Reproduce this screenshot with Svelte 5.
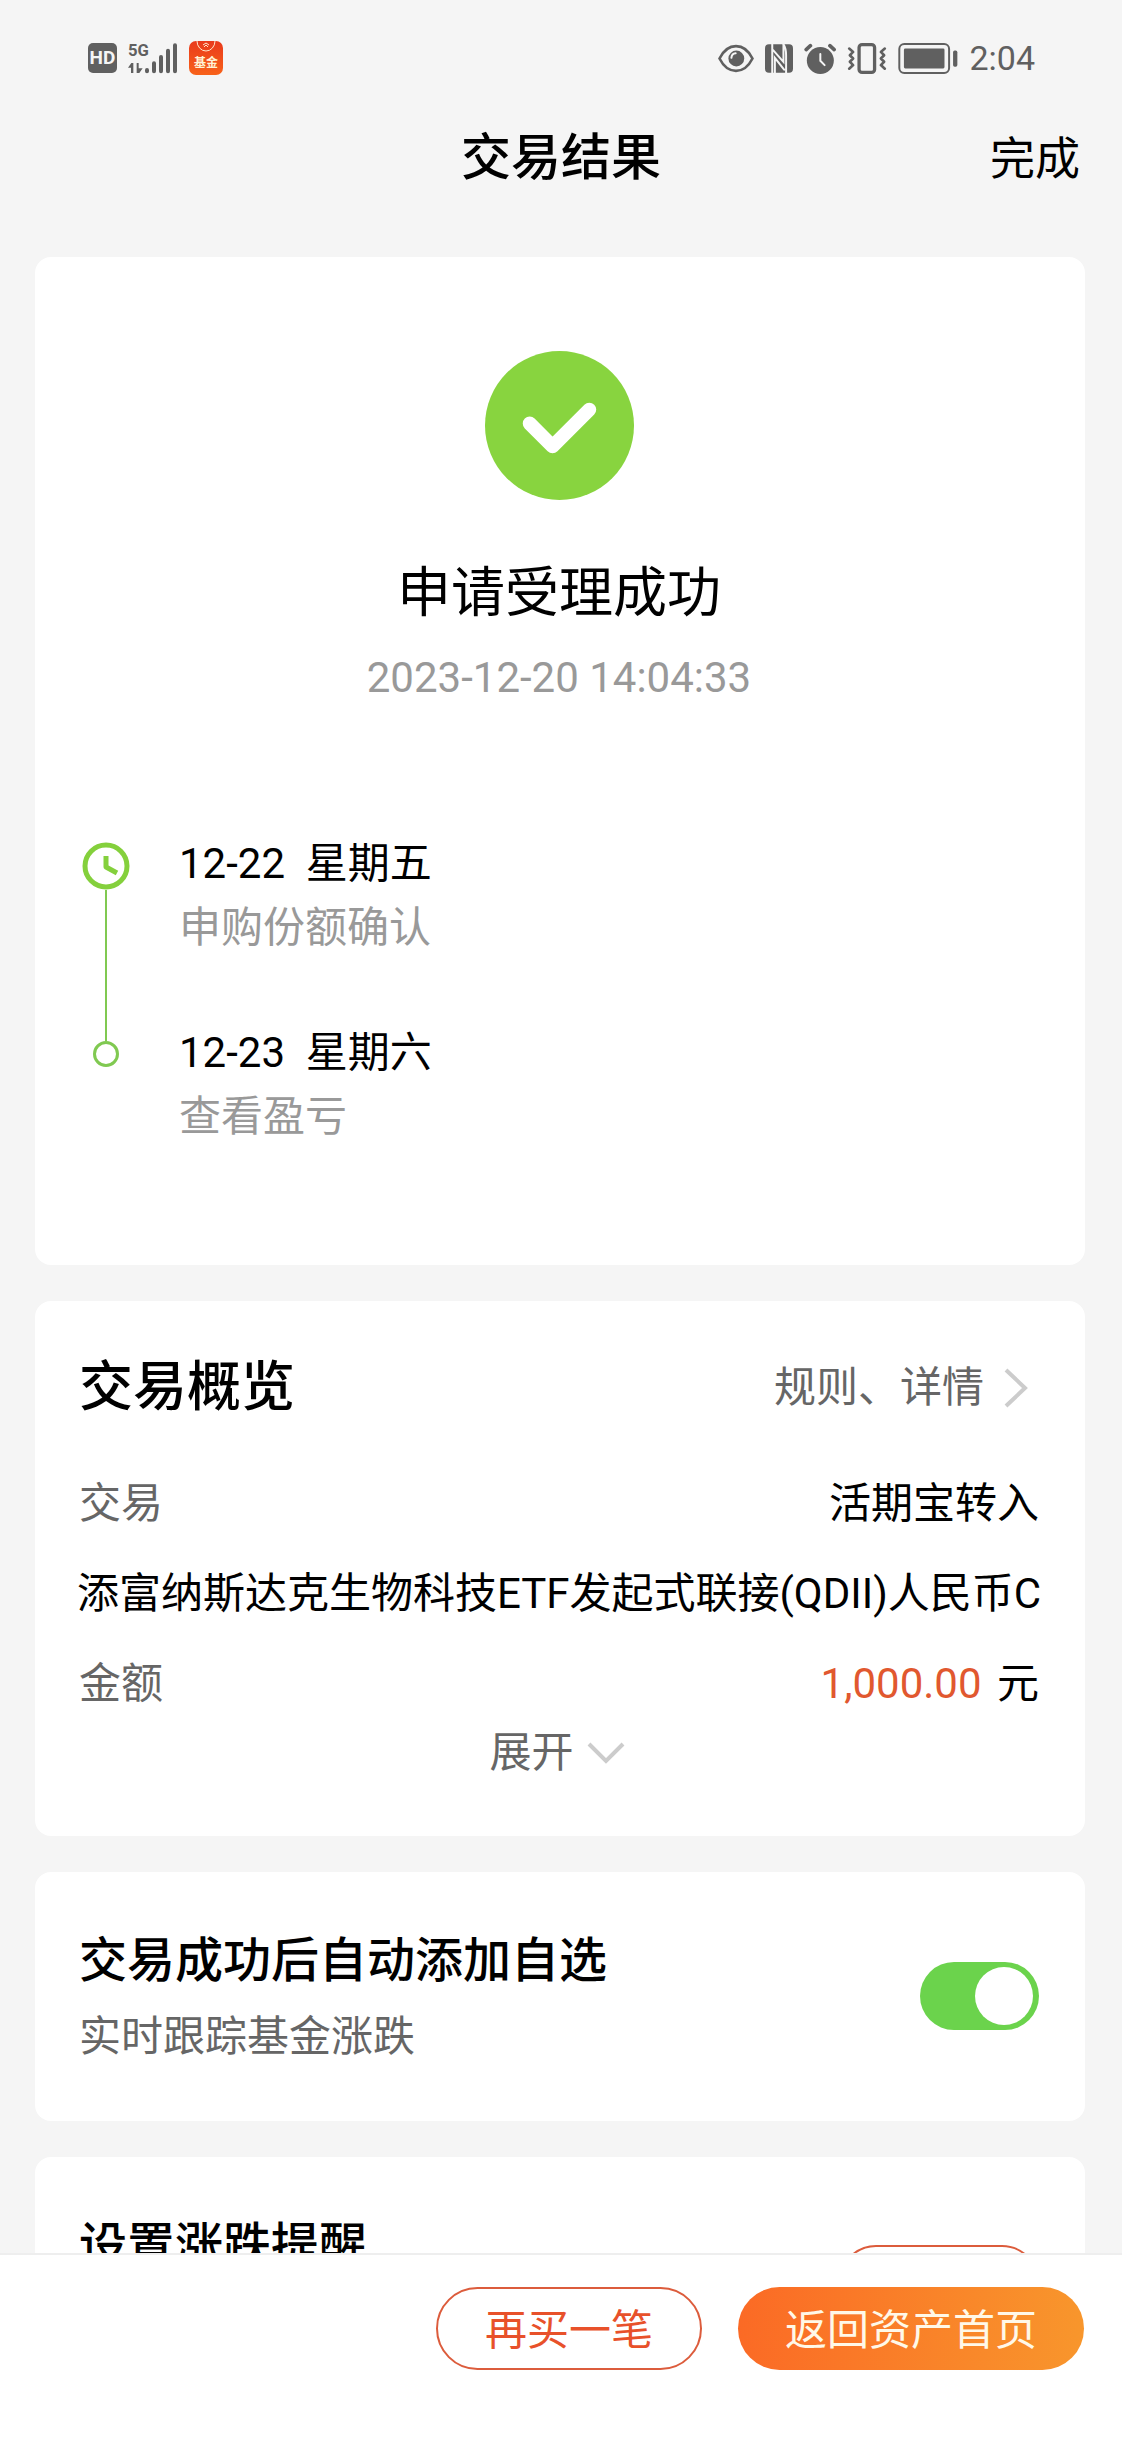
<script lang="ts">
  type Step = { date: string; day: string; note: string };

  const steps: Step[] = [
    { date: '12-22', day: '星期五', note: '申购份额确认' },
    { date: '12-23', day: '星期六', note: '查看盈亏' },
  ];

  let autoAdd = $state(true);
</script>

<div class="page">
  <div class="status">
    <div class="status-group">
      <span class="hd">HD</span>
      <svg class="signal" viewBox="205 65 150 96">
        <text x="205" y="108" font-size="50" font-weight="700">5G</text>
        <path d="M205 142L215 128H221V158H214V142ZM231 128H237V144H249L239 158H231Z" />
        <path class="bars" d="M262 149V153M283 129V153M304 110V153M325 91V153M346 75V153" />
      </svg>
      <span class="fund">
        <svg viewBox="0 0 34 11">
          <path d="M8 0A9 10 0 0 0 26 0" />
          <path d="M14 4L17 2L20 4M15 6L17 4L19 6" />
        </svg>
        <span>基金</span>
      </span>
    </div>
    <div class="status-group">
      <svg width="36" height="29" viewBox="53 70 108 88">
        <path class="line" d="M57 114C82 64 132 64 157 114C132 164 82 164 57 114Z" />
        <circle cx="108" cy="114" r="24" />
        <path class="cut" d="M93 112Q94 99 106 98" />
      </svg>
      <svg width="28" height="29" viewBox="196 71 85 86">
        <rect x="196" y="71" width="85" height="86" rx="12" />
        <path class="cut" d="M218 68V160M220 88L252 124V74M226 160V112L254 148M250 68Q260 80 260 104V160" />
      </svg>
      <svg width="32" height="31" viewBox="313 66 96 94">
        <circle cx="362" cy="119" r="41" />
        <path class="horn" d="M319 86L332 74M391 74L404 86" />
        <path class="hand" d="M362 99V120L375 133" />
      </svg>
      <svg width="40" height="31" viewBox="441 66 120 94">
        <rect class="case" x="477" y="71" width="47" height="84" rx="9" />
        <path class="wave" d="M447 83L459 93L449 103L459 113L449 123L459 133L447 144M555 83L543 93L553 103L543 113L553 123L543 133L555 144" />
      </svg>
      <svg width="60" height="31" viewBox="597 66 180 94">
        <rect class="shell" x="600" y="69" width="151" height="88" rx="15" />
        <rect x="614" y="83" width="123" height="60" rx="4" />
        <rect x="763" y="89" width="13" height="49" rx="5" />
      </svg>
      <span class="time">2:04</span>
    </div>
  </div>

  <header>
    <h1>交易结果</h1>
    <button class="done">完成</button>
  </header>

  <main>
    <section class="card result">
      <svg class="success" viewBox="0 0 150 150">
        <circle cx="75" cy="75" r="75" />
        <path d="M45 73L68 96L105 59" />
      </svg>
      <h2>申请受理成功</h2>
      <p class="datetime">2023-12-20 14:04:33</p>

      <ol>
        {#each steps as step, i}
          <li>
            <div class="marker">
              {#if i === 0}
                <svg class="clock" viewBox="0 0 48 48">
                  <circle cx="24" cy="24" r="21" />
                  <path d="M24 14V25L35 31" />
                </svg>
              {:else}
                <span class="lead"></span>
                <span class="dot"></span>
              {/if}
              {#if i < steps.length - 1}
                <span class="track"></span>
              {/if}
            </div>
            <div class="step">
              <p class="when">{step.date}&nbsp; {step.day}</p>
              <p class="note">{step.note}</p>
            </div>
          </li>
        {/each}
      </ol>
    </section>

    <section class="card overview">
      <div class="overview-head">
        <h2>交易概览</h2>
        <a href="#detail">
          规则、详情
          <svg width="24" height="40" viewBox="0 0 24 40"><path d="M2 2L21 20L2 38" /></svg>
        </a>
      </div>
      <div class="row"><span class="label">交易</span><span>活期宝转入</span></div>
      <div class="row name">添富纳斯达克生物科技ETF发起式联接(QDII)人民币C</div>
      <div class="row">
        <span class="label">金额</span>
        <span><span class="amount">1,000.00</span> 元</span>
      </div>
      <button class="expand">
        展开
        <svg width="38" height="22" viewBox="0 0 38 22"><path d="M2 2L19 19L36 2" /></svg>
      </button>
    </section>

    <section class="card setting">
      <label class="text" for="auto-add">
        <span class="title">交易成功后自动添加自选</span>
        <span class="sub">实时跟踪基金涨跌</span>
      </label>
      <input id="auto-add" class="switch" type="checkbox" role="switch" bind:checked={autoAdd} />
    </section>

    <section class="card setting">
      <div class="text">
        <span class="title">设置涨跌提醒</span>
        <span class="sub"></span>
      </div>
      <button class="remind" aria-label="设置涨跌提醒"></button>
    </section>
  </main>

  <footer>
    <button class="again">再买一笔</button>
    <button class="home">返回资产首页</button>
  </footer>
</div>

<style>
  :global(body) {
    margin: 0;
  }
  .page {
    display: flex;
    flex-direction: column;
    height: 100vh;
    background: #f5f5f5;
    color: #000;
    font-family: Roboto, "Noto Sans CJK SC", sans-serif;
    font-size: 42px;
  }
  h1, h2, p, ol {
    margin: 0;
    padding: 0;
    font-weight: 400;
  }
  button {
    border: none;
    padding: 0;
    background: none;
    color: inherit;
    font: inherit;
    white-space: nowrap;
    cursor: pointer;
  }

  /* status bar */
  .status {
    display: flex;
    flex: none;
    justify-content: space-between;
    align-items: center;
    height: 116px;
    padding: 0 87px 0 88px;
    color: #606060;
  }
  .status-group {
    display: flex;
    align-items: center;
    gap: 11px;
  }
  .status svg {
    display: block;
    fill: #606060;
  }
  .status .signal {
    width: 50px;
    height: 32px;
    overflow: visible;
  }
  .bars {
    stroke: #606060;
    stroke-width: 12;
    stroke-linecap: round;
  }
  .hd {
    width: 29px;
    border-radius: 5px;
    background: #606060;
    color: #f5f5f5;
    font-size: 19px;
    font-weight: 700;
    line-height: 30px;
    text-align: center;
  }
  .fund {
    display: flex;
    flex-direction: column;
    width: 34px;
    height: 34px;
    border-radius: 7px;
    background: linear-gradient(#e93a1c, #f8621a);
    color: #fff3d6;
    font-size: 12px;
    font-weight: 700;
    line-height: 22px;
    text-align: center;
  }
  .status .fund svg {
    fill: none;
    stroke: #ffe6cc;
    stroke-width: 1;
  }
  .status .line, .status .case, .status .shell, .status .wave {
    fill: none;
    stroke: #606060;
    stroke-width: 8;
  }
  .status .case {
    stroke-width: 10;
  }
  .status .shell {
    stroke-width: 6;
  }
  .status .wave {
    stroke-linejoin: round;
    stroke-linecap: round;
  }
  .status .cut, .status .hand {
    fill: none;
    stroke: #f5f5f5;
    stroke-width: 6;
    stroke-linecap: round;
  }
  .horn {
    stroke: #606060;
    stroke-width: 11;
    stroke-linecap: round;
  }
  .time {
    font-size: 34px;
    line-height: 40px;
  }

  header {
    display: grid;
    flex: none;
    grid-template-columns: 1fr auto 1fr;
    align-items: baseline;
    height: 84px;
    padding: 0 42px;
  }
  h1 {
    grid-column: 2;
    font-size: 50px;
    font-weight: 500;
    line-height: 84px;
  }
  .done {
    justify-self: end;
    font-size: 45px;
    line-height: 84px;
  }

  main {
    display: flex;
    flex: 1;
    flex-direction: column;
    gap: 36px;
    min-height: 0;
    padding: 57px 37px 0 35px;
    overflow-y: auto;
    scrollbar-width: none;
  }
  .card {
    flex: none;
    border-radius: 16px;
    background: #fff;
  }

  /* result */
  .result {
    display: flex;
    flex-direction: column;
    align-items: center;
    padding: 94px 49px 116px 47px;
  }
  .success {
    width: 149px;
    height: 149px;
    fill: #88d43f;
  }
  .success path {
    fill: none;
    stroke: #fff;
    stroke-width: 14;
    stroke-linecap: round;
    stroke-linejoin: round;
  }
  .result h2 {
    margin-top: 56px;
    font-size: 54px;
    line-height: 76px;
  }
  .datetime {
    margin-top: 16px;
    color: #999;
    line-height: 60px;
  }
  ol {
    align-self: stretch;
    margin-top: 124px;
    list-style: none;
  }
  li {
    display: flex;
    gap: 49px;
  }
  li:not(:last-child) .step {
    padding-bottom: 61px;
  }
  .marker {
    display: flex;
    flex-direction: column;
    align-items: center;
    width: 48px;
  }
  .clock {
    width: 48px;
    height: 48px;
    margin-top: 10px;
    fill: none;
    stroke: #84d03c;
    stroke-width: 5;
    stroke-linejoin: round;
  }
  .track, .lead {
    width: 2px;
    background: #80c951;
  }
  .track {
    flex: 1;
  }
  .lead {
    height: 20px;
  }
  .dot {
    box-sizing: border-box;
    width: 26px;
    height: 26px;
    border: 3px solid #80c951;
    border-radius: 50%;
  }
  .when, .note {
    line-height: 64px;
  }
  .note {
    color: #999;
  }

  /* overview */
  .overview {
    padding: 47px 46px 59px 44px;
  }
  .overview-head {
    display: flex;
    justify-content: space-between;
    align-items: center;
    margin-bottom: 31px;
    line-height: 80px;
  }
  .overview h2 {
    font-size: 54px;
    font-weight: 500;
  }
  a {
    display: flex;
    align-items: center;
    gap: 20px;
    padding-right: 11px;
    color: #666;
    text-decoration: none;
  }
  a svg, .expand svg {
    fill: none;
    stroke: #ccc;
    stroke-width: 4;
  }
  .row {
    display: flex;
    justify-content: space-between;
    line-height: 90px;
    white-space: nowrap;
  }
  .row.name {
    justify-content: center;
  }
  .label {
    color: #666;
  }
  .amount {
    margin-right: 5px;
    color: #e1582f;
  }
  .expand {
    display: flex;
    align-items: center;
    gap: 13px;
    margin: 0 auto;
    padding-right: 4px;
    color: #666;
    line-height: 48px;
  }

  /* settings */
  .setting {
    display: flex;
    justify-content: space-between;
    align-items: center;
    min-height: 249px;
    padding: 0 46px 0 44px;
  }
  .text {
    display: flex;
    flex-direction: column;
    padding-top: 9px;
  }
  .title {
    font-size: 48px;
    font-weight: 500;
    line-height: 72px;
  }
  .sub {
    min-height: 80px;
    color: #666;
    line-height: 80px;
  }
  .switch {
    appearance: none;
    width: 119px;
    height: 68px;
    margin: 0 0 2px;
    padding: 5px 6px;
    box-sizing: border-box;
    border-radius: 34px;
    background: #ccc;
    cursor: pointer;
  }
  .switch::before {
    content: '';
    display: block;
    width: 58px;
    height: 58px;
    border-radius: 50%;
    background: #fff;
  }
  .switch:checked {
    background: #6bd34c;
  }
  .switch:checked::before {
    margin-left: auto;
  }
  .remind {
    width: 200px;
    height: 74px;
    border: 2px solid #dc5c3c;
    border-radius: 37px;
  }

  footer {
    display: flex;
    flex: none;
    justify-content: flex-end;
    gap: 36px;
    padding: 32px 38px 72px;
    border-top: 2px solid #eee;
    background: #fff;
  }
  footer button {
    height: 83px;
    padding: 0 47px 5px;
    border-radius: 42px;
  }
  .again {
    border: 2px solid #dc5c3c;
    color: #e8512a;
  }
  .home {
    background: linear-gradient(90deg, #fb6a25, #f8962c);
    color: #fff8e8;
  }
</style>
